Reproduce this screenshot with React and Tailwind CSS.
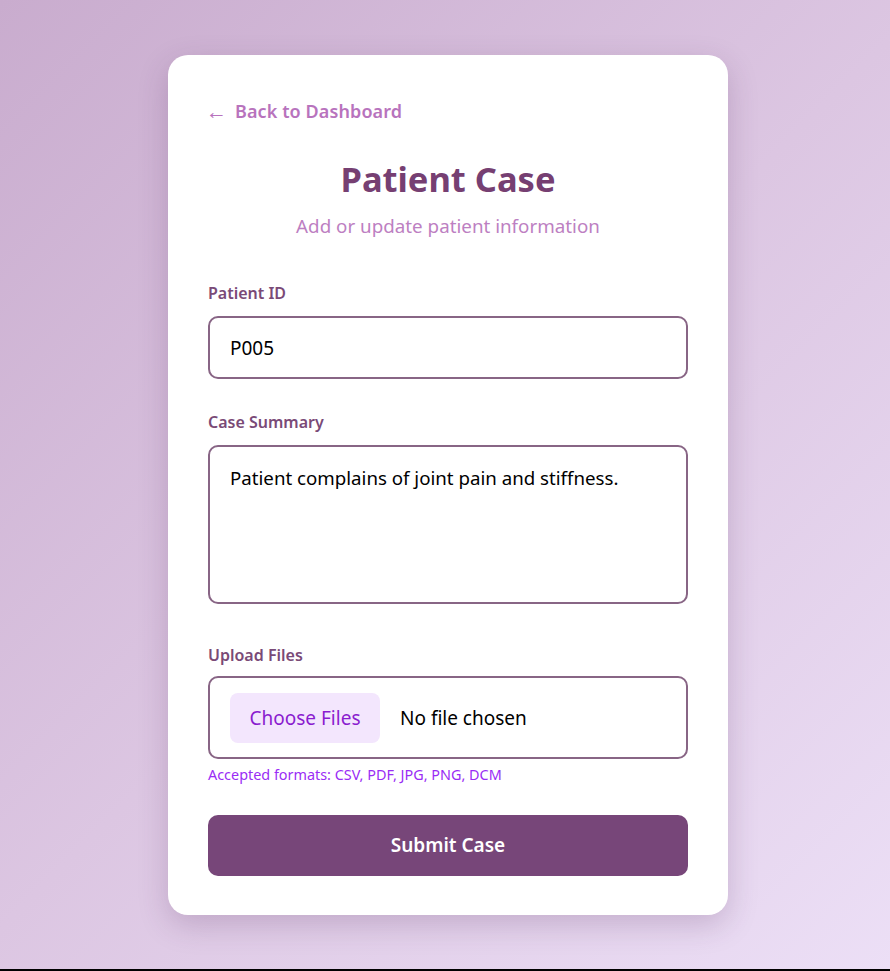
export default function App() {
    return (
        <div className="flex flex-col" style={{ fontFamily: '"Noto Sans", "Open Sans", sans-serif' }}>
            {/* fondo con degradado */}
            <div className="h-[969px] flex justify-center pl-[6px] pt-[55px] bg-[linear-gradient(135deg,#c9acce_0%,#dcc6e2_50%,#ecdff6_100%)]">
                <div className="w-[560px] h-[860px] bg-white rounded-[20px] px-10 pt-[43px] shadow-[0_10px_30px_rgba(80,40,90,0.22)]">
                    <a href="#" className="-ml-[2px] flex items-center gap-[8px] text-[18px] font-semibold text-[#b873bd]">
                        <span className="font-normal text-[21px] leading-none">←</span>
                        <span className="tracking-[0.1px]">Back to Dashboard</span>
                    </a>

                    <h1 className="mt-[32px] text-center text-[34.5px] font-bold leading-tight text-[#763f72]">Patient Case</h1>
                    <p className="mt-[12px] text-center text-[18.8px] text-[#bd7fc2]">Add or update patient information</p>

                    <form className="mt-[41px] flex flex-col" onSubmit={e => e.preventDefault()}>
                        <label className="text-[16px] font-semibold text-[#7a4a77]">Patient ID</label>
                        <input
                            defaultValue="P005"
                            className="mt-[11px] h-[63px] w-full rounded-[10px] border-2 border-[#886585] px-5 text-[19px] text-black outline-none"
                        />

                        <label className="mt-[31px] text-[16px] font-semibold text-[#7a4a77]">Case Summary</label>
                        <textarea
                            defaultValue="Patient complains of joint pain and stiffness."
                            className="mt-[11px] h-[159px] w-full resize-none rounded-[10px] border-2 border-[#886585] px-5 pt-[17px] text-[18.7px] text-black outline-none"
                        />

                        <label className="mt-[39px] text-[16px] font-semibold text-[#7a4a77]">Upload Files</label>
                        <div className="mt-[9px] flex h-[83px] items-center gap-5 rounded-[10px] border-2 border-[#886585] px-5">
                            <button type="button" className="h-[50px] w-[150px] rounded-[8px] bg-[#f3e6fd] text-[19px] text-[#8a1ccf]">Choose Files</button>
                            <span className="text-[19px] text-black">No file chosen</span>
                        </div>
                        <p className="mt-[5px] text-[14.4px] text-[#9a2cf5]">Accepted formats: CSV, PDF, JPG, PNG, DCM</p>

                        <button type="submit" className="mt-[29px] h-[61px] w-full rounded-[10px] bg-[#774679] text-[19px] font-semibold text-white">
                            Submit Case
                        </button>
                    </form>
                </div>
            </div>
            <div className="h-[2px] bg-black" />
        </div>
    );
}
